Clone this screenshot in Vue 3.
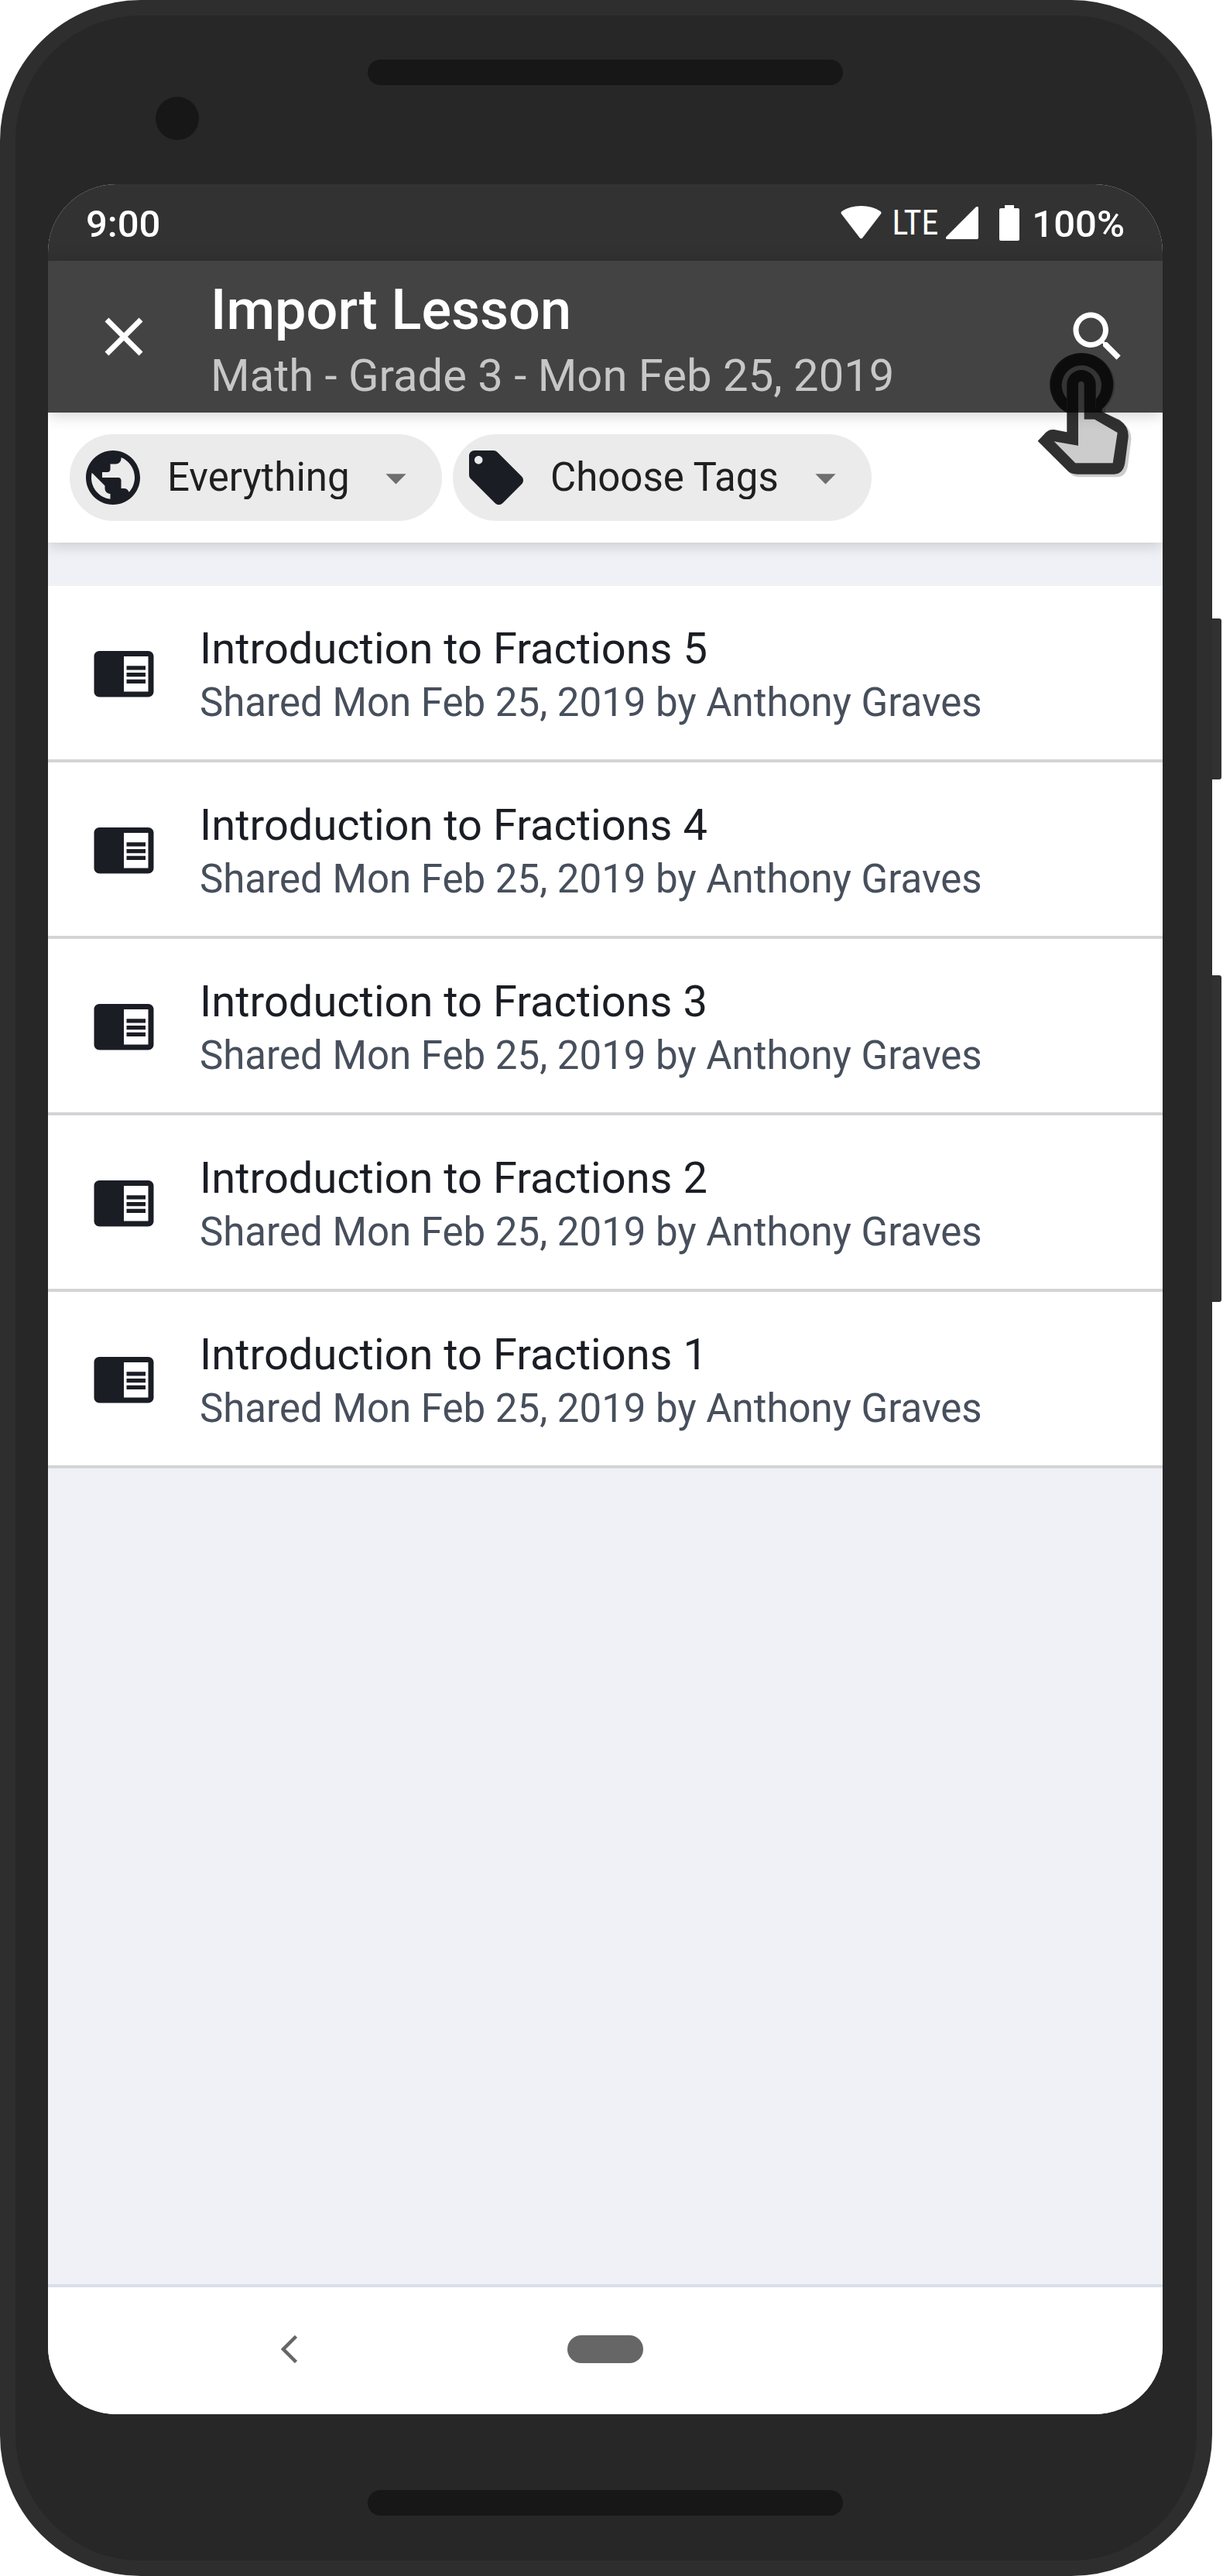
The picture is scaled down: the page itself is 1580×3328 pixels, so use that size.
<script setup>
import { ref } from 'vue'

const scope = ref('Everything')
const tag = ref('Choose Tags')
const lessons = [5, 4, 3, 2, 1].map((n) => ({
  id: n,
  title: `Introduction to Fractions ${n}`,
  detail: 'Shared Mon Feb 25, 2019 by Anthony Graves',
}))
</script>

<template>
  <div class="device">
    <div class="phone">
      <div class="bezel-top">
        <span class="camera"></span>
        <span class="speaker"></span>
      </div>

      <main class="screen">
        <div class="status">
          <span class="status-text">9:00</span>
          <div class="status-right">
            <svg class="wifi" viewBox="0 0 53 43" aria-hidden="true">
              <path d="M1.500 11Q-.5 9 1.500 7Q12 0 26.500 0T51.500 7Q53.500 9 51.500 11L28.500 41Q26.500 43.500 24.500 41Z" fill="#fff" />
            </svg>
            <span class="network">LTE</span>
            <svg class="signal" viewBox="0 0 42 42" aria-hidden="true">
              <path d="M38.500.8Q42-1.500 42 2V40Q42 42 40 42H2Q-1.500 42 .8 38.500Z" fill="#fff" />
            </svg>
            <svg class="battery" viewBox="0 0 26 46" aria-hidden="true">
              <path d="M7 0H19V4H24Q26 4 26 6V44Q26 46 24 46H2Q0 46 0 44V6Q0 4 2 4H7Z" fill="#fff" />
            </svg>
            <span class="status-text">100%</span>
          </div>
        </div>

        <header class="toolbar">
          <button class="icon-button" type="button" aria-label="Close">
            <svg class="icon" viewBox="0 0 24 24">
              <path d="M19 6.410L17.590 5 12 10.590 6.410 5 5 6.410 10.590 12 5 17.590 6.410 19 12 13.410 17.590 19 19 17.590 13.410 12z" fill="#fff" />
            </svg>
          </button>
          <div class="heading">
            <h1>Import Lesson</h1>
            <p>Math - Grade 3 - Mon Feb 25, 2019</p>
          </div>
          <button class="icon-button search" type="button" aria-label="Search">
            <svg class="icon" viewBox="0 0 24 24">
              <path d="M15.500 14h-.79l-.28-.27C15.410 12.590 16 11.110 16 9.500 16 5.910 13.090 3 9.500 3S3 5.910 3 9.500 5.910 16 9.500 16c1.610 0 3.090-.59 4.230-1.570l.27.28v.79l5 4.990L20.490 19l-4.990-5zm-6 0C7.010 14 5 11.990 5 9.500S7.010 5 9.500 5 14 7.010 14 9.500 11.990 14 9.500 14z" fill="#fff" />
            </svg>
            <svg class="pointer" viewBox="0 0 450 555" aria-hidden="true">
              <path class="shade" d="M145 264A123 123 0 1 1 293 247L294 266L361 306Q397 329 394 371L381 471Q373 514 339 514H196Q171 514 159 501L32 374L65 340Q78 328 95 330L145 340Z" />
              <g class="ink">
                <path d="M145 265A123 123 0 1 1 282 249H257V212A77 77 0 1 0 145 210Z" />
                <path fill-rule="evenodd" d="M145 264V155A56 56 0 0 1 257 155V249H282L280 260L350 293Q386 318 383 360L370 460Q362 503 328 503H185Q160 503 148 490L32 374L65 340Q78 328 95 330L145 340ZM189 392V155A11.500 11.500 0 0 1 212 155V290H252L341 342L323 460H178L95 376Z" />
              </g>
            </svg>
          </button>
        </header>

        <div class="filters">
          <label class="chip">
            <svg class="icon" viewBox="0 0 24 24" aria-hidden="true">
              <path d="M12 2C6.480 2 2 6.480 2 12s4.480 10 10 10 10-4.480 10-10S17.520 2 12 2zm-1 17.930c-3.950-.49-7-3.850-7-7.930 0-.62.08-1.210.21-1.790L9 15v1c0 1.100.9 2 2 2v1.930zm6.900-2.540c-.26-.81-1-1.390-1.900-1.390h-1v-3c0-.55-.45-1-1-1H8v-2h2c.55 0 1-.45 1-1V7h2c1.100 0 2-.9 2-2v-.41c2.930 1.190 5 4.060 5 7.410 0 2.080-.8 3.970-2.100 5.390z" fill="#1a1d24" />
            </svg>
            <select v-model="scope" aria-label="Scope">
              <option>Everything</option>
            </select>
            <svg class="caret" viewBox="0 0 24 24" aria-hidden="true"><path d="M7 10l5 5 5-5z" fill="#6e6e6e" /></svg>
          </label>
          <label class="chip">
            <svg class="icon" viewBox="0 0 24 24" aria-hidden="true">
              <path d="M21.410 11.580l-9-9C12.050 2.220 11.550 2 11 2H4c-1.100 0-2 .9-2 2v7c0 .55.22 1.050.59 1.420l9 9c.36.36.86.58 1.410.58.55 0 1.050-.22 1.410-.59l7-7c.37-.36.59-.86.59-1.410 0-.55-.23-1.060-.59-1.420zM5.500 7C4.670 7 4 6.330 4 5.500S4.670 4 5.500 4 7 4.670 7 5.500 6.330 7 5.500 7z" fill="#1a1d24" />
            </svg>
            <select v-model="tag" aria-label="Tags">
              <option>Choose Tags</option>
            </select>
            <svg class="caret" viewBox="0 0 24 24" aria-hidden="true"><path d="M7 10l5 5 5-5z" fill="#6e6e6e" /></svg>
          </label>
        </div>

        <ul class="lessons">
          <li v-for="lesson in lessons" :key="lesson.id" class="lesson">
            <svg class="icon" viewBox="0 0 24 24" aria-hidden="true">
              <path d="M13 12h7v1.500h-7zm0-2.500h7V11h-7zm0 5h7V16h-7zM21 4H3c-1.100 0-2 .9-2 2v13c0 1.100.9 2 2 2h18c1.100 0 2-.9 2-2V6c0-1.100-.9-2-2-2zm0 15h-9V6h9v13z" fill="#1a1d24" />
            </svg>
            <div class="lesson-text">
              <h2>{{ lesson.title }}</h2>
              <p>{{ lesson.detail }}</p>
            </div>
          </li>
        </ul>

        <nav class="navbar">
          <button class="nav-back" type="button" aria-label="Back">
            <svg viewBox="0 0 22 36"><path d="M19.500 1.500L3 18L19.500 34.500" fill="none" stroke="#666" stroke-width="4.500" /></svg>
          </button>
          <button class="nav-home" type="button" aria-label="Home"></button>
        </nav>
      </main>

      <div class="bezel-bottom"><span class="speaker"></span></div>
    </div>

    <div class="side-keys">
      <span class="key power"></span>
      <span class="key volume"></span>
    </div>
  </div>
</template>

<style>
body {
  margin: 0;
  background: #fff;
}
</style>

<style scoped>
.device {
  display: flex;
  min-height: 100vh;
  font-family: Roboto, sans-serif;
}
.phone {
  flex: 1;
  min-width: 0;
  box-sizing: border-box;
  display: flex;
  flex-direction: column;
  padding: 0 44px 0 42px;
  border: 20px solid #2e2e2e;
  border-radius: 182px;
  background: #272727;
}
.bezel-top {
  display: grid;
  grid-template-columns: 1fr 614px 1fr;
  align-items: start;
  height: 218px;
}
.camera {
  width: 56px;
  height: 56px;
  margin: 105px 0 0 139px;
  border-radius: 50%;
  background: #171717;
}
.speaker {
  width: 614px;
  height: 33px;
  border-radius: 17px;
  background: #171717;
}
.bezel-top .speaker {
  margin-top: 57px;
}
.bezel-bottom {
  display: flex;
  justify-content: center;
  height: 91px;
  padding-top: 98px;
}
.screen {
  flex: 1;
  display: flex;
  flex-direction: column;
  overflow: hidden;
  border-radius: 88px;
  background: #f0f1f6;
}

.status {
  display: flex;
  align-items: center;
  justify-content: space-between;
  height: 99px;
  padding: 0 49px;
  background: #323232;
  color: #fff;
}
.status-right {
  display: flex;
  align-items: center;
}
.status-text {
  padding-top: 4px;
  font-size: 49px;
  font-weight: 500;
  line-height: 56px;
}
.wifi {
  width: 53px;
  height: 43px;
}
.network {
  margin: 0 10px 0 14px;
  font-family: "Roboto Condensed", "Liberation Sans Narrow", Roboto, sans-serif;
  font-size: 44px;
  line-height: 56px;
}
.signal {
  width: 42px;
  height: 42px;
}
.battery {
  width: 26px;
  height: 46px;
  margin: 0 16px 0 27px;
}

.icon {
  display: block;
  flex: none;
  width: 84px;
  height: 84px;
}
.toolbar {
  position: relative;
  z-index: 2;
  display: flex;
  align-items: center;
  height: 196px;
  padding: 0 42px 0 56px;
  background: #434343;
  box-shadow: 0 2px 20px rgba(0, 0, 0, 0.2);
}
.icon-button {
  position: relative;
  flex: none;
  padding: 0;
  border: 0;
  background: none;
}
.pointer {
  position: absolute;
  top: 52px;
  right: -20px;
  width: 150px;
  height: 185px;
}
.shade {
  fill: rgba(0, 0, 0, 0.2);
}
.ink {
  opacity: 0.76;
  fill: #000;
}
.heading {
  flex: 1;
  min-width: 0;
  padding: 16px 0 0 70px;
}
.heading h1 {
  margin: 0;
  font-size: 72px;
  font-weight: 500;
  line-height: 84px;
  color: #fff;
}
.heading p {
  margin: 0;
  font-size: 58px;
  line-height: 84px;
  color: #c7c7c7;
}

.filters {
  position: relative;
  z-index: 1;
  display: flex;
  align-items: center;
  gap: 14px;
  height: 168px;
  padding: 0 28px;
  background: #fff;
  box-shadow: 0 2px 20px rgba(0, 0, 0, 0.2);
}
.chip {
  display: flex;
  align-items: center;
  gap: 28px;
  height: 112px;
  padding: 0 28px 0 14px;
  border-radius: 56px;
  background: #ebebeb;
}
.chip select {
  appearance: none;
  margin: 0;
  padding: 0;
  border: 0;
  background: none;
  font: 51px/56px Roboto, sans-serif;
  color: #1f1f1f;
}
.caret {
  width: 63px;
  height: 63px;
}

.lessons {
  flex: 1;
  margin: 56px 0 0;
  padding: 0;
  list-style: none;
}
.lesson {
  display: flex;
  align-items: center;
  gap: 56px;
  height: 224px;
  padding: 0 56px;
  border-bottom: 4px solid #d3d4d6;
  background: #fff;
}
.lesson-text {
  padding-top: 8px;
}
.lesson h2 {
  margin: 0;
  font-size: 56px;
  font-weight: 400;
  line-height: 70px;
  color: #1a1d24;
}
.lesson p {
  margin: 0;
  font-size: 51px;
  line-height: 70px;
  color: #474f5c;
}

.navbar {
  display: grid;
  grid-template-columns: 1fr 98px 1fr;
  align-items: center;
  height: 160px;
  padding-bottom: 4px;
  border-top: 4px solid #d9dfe8;
  background: #fff;
}
.nav-back {
  justify-self: center;
  width: 56px;
  height: 56px;
  margin-right: 48px;
  padding: 0;
  border: 0;
  background: none;
}
.nav-back svg {
  display: block;
  width: 22px;
  height: 36px;
  margin: 0 auto;
}
.nav-home {
  height: 36px;
  padding: 0;
  border: 0;
  border-radius: 18px;
  background: #666;
}

.side-keys {
  display: flex;
  flex-direction: column;
  gap: 253px;
  width: 14px;
  padding-top: 799px;
}
.key {
  width: 12px;
  border-radius: 0 3px 3px 0;
  background: #313131;
}
.power {
  height: 208px;
}
.volume {
  height: 422px;
}
</style>
